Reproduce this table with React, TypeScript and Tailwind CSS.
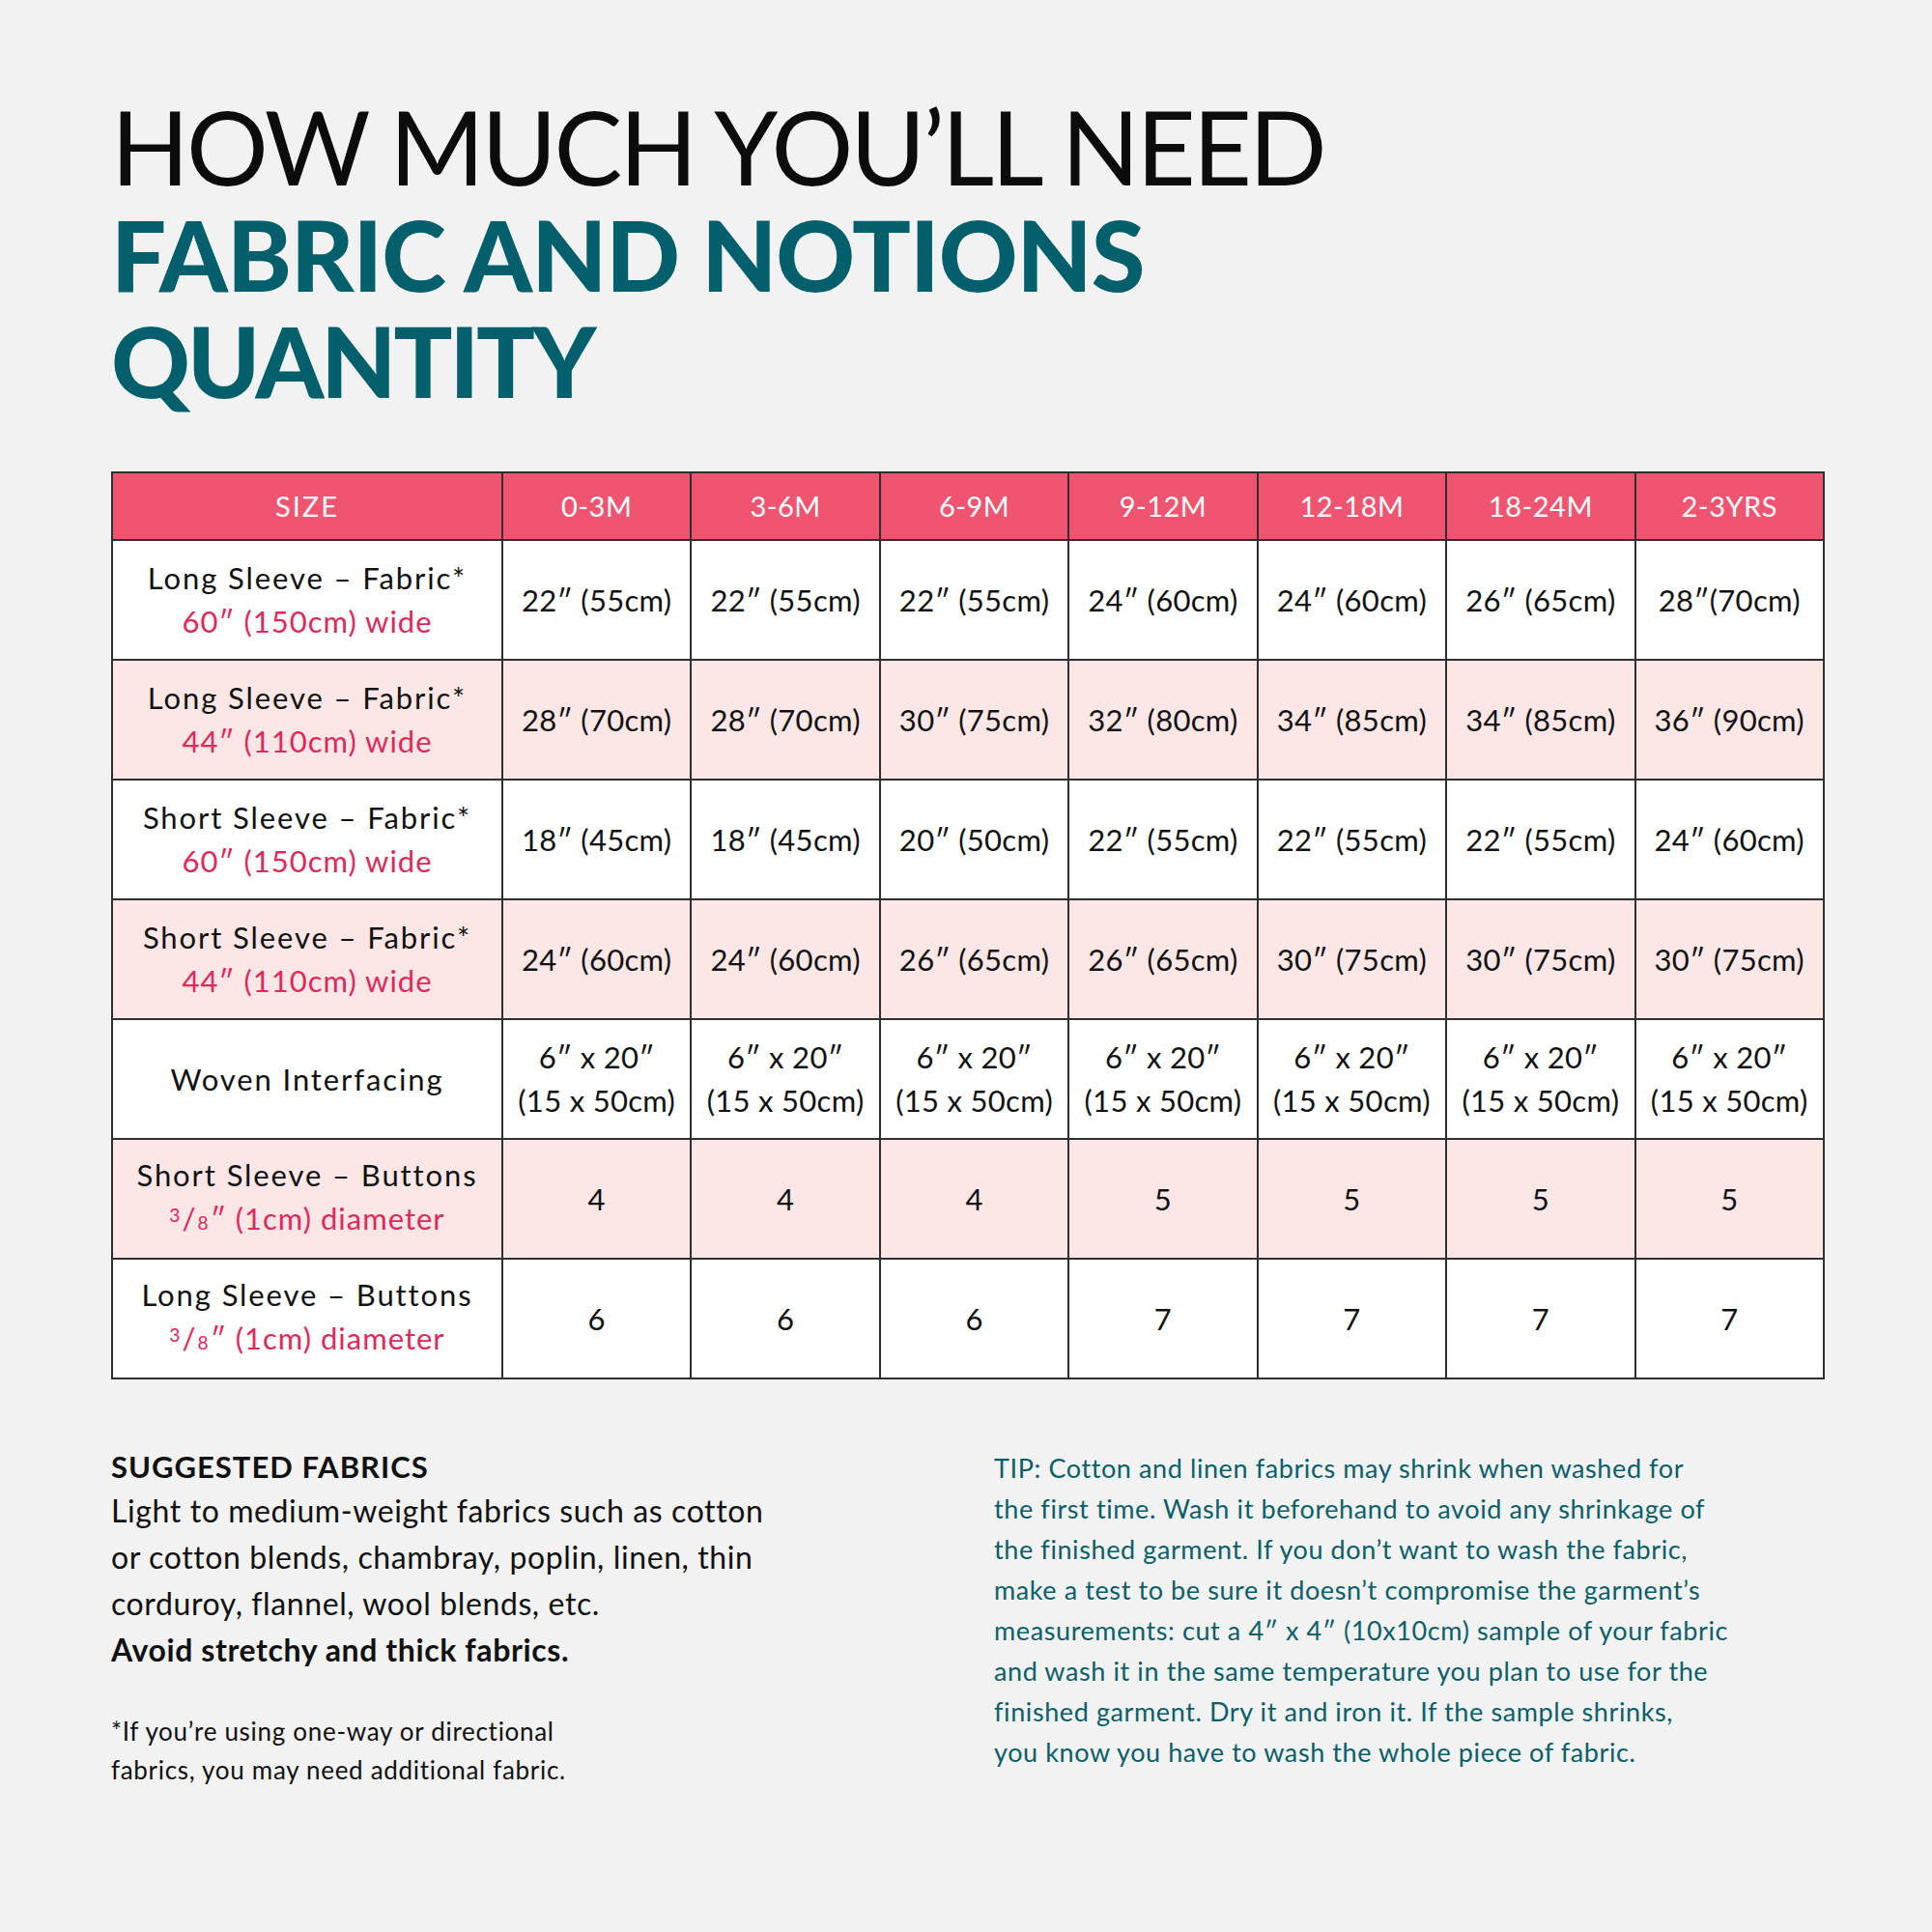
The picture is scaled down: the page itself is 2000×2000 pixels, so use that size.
import React from "react";

const sizes = ["0-3M", "3-6M", "6-9M", "9-12M", "12-18M", "18-24M", "2-3YRS"];

type Row = {
  label: string;
  sub?: React.ReactNode;
  pink: boolean;
  values: React.ReactNode[];
};

const Frac = () => (
  <span className="mr-[1px]">
    <span className="text-[0.62em] relative top-[-0.42em]">3</span>
    <span className="mx-[1px]">/</span>
    <span className="text-[0.62em]">8</span>
  </span>
);

const rows: Row[] = [
  {
    label: "Long Sleeve – Fabric*",
    sub: "60″ (150cm) wide",
    pink: false,
    values: ["22″ (55cm)", "22″ (55cm)", "22″ (55cm)", "24″ (60cm)", "24″ (60cm)", "26″ (65cm)", "28″(70cm)"],
  },
  {
    label: "Long Sleeve – Fabric*",
    sub: "44″ (110cm) wide",
    pink: true,
    values: ["28″ (70cm)", "28″ (70cm)", "30″ (75cm)", "32″ (80cm)", "34″ (85cm)", "34″ (85cm)", "36″ (90cm)"],
  },
  {
    label: "Short Sleeve – Fabric*",
    sub: "60″ (150cm) wide",
    pink: false,
    values: ["18″ (45cm)", "18″ (45cm)", "20″ (50cm)", "22″ (55cm)", "22″ (55cm)", "22″ (55cm)", "24″ (60cm)"],
  },
  {
    label: "Short Sleeve – Fabric*",
    sub: "44″ (110cm) wide",
    pink: true,
    values: ["24″ (60cm)", "24″ (60cm)", "26″ (65cm)", "26″ (65cm)", "30″ (75cm)", "30″ (75cm)", "30″ (75cm)"],
  },
  {
    label: "Woven Interfacing",
    pink: false,
    values: Array(7).fill(
      <>
        6″ x 20″
        <br />
        (15 x 50cm)
      </>
    ),
  },
  {
    label: "Short Sleeve – Buttons",
    sub: (
      <>
        <Frac />″ (1cm) diameter
      </>
    ),
    pink: true,
    values: ["4", "4", "4", "5", "5", "5", "5"],
  },
  {
    label: "Long Sleeve – Buttons",
    sub: (
      <>
        <Frac />″ (1cm) diameter
      </>
    ),
    pink: false,
    values: ["6", "6", "6", "7", "7", "7", "7"],
  },
];

export default function App() {
  return (
    <div className="w-[2000px] h-[2000px] bg-[#f1f2f1] pl-[115px] pt-[96px] font-['Lato',sans-serif] text-[#111]">
      {/* heading */}
      <h1 className="leading-[110px]">
        <span className="block text-[106px] font-normal text-[#0c0c0c] tracking-[-3px]">
          HOW MUCH YOU’LL NEED
        </span>
        <span className="block text-[101px] font-black text-[#035f6b] tracking-[-1px] pt-[2px]">
          FABRIC AND NOTIONS
        </span>
        <span className="block text-[101px] font-black text-[#035f6b] tracking-[-3px]">
          QUANTITY
        </span>
      </h1>

      {/* table */}
      <table className="mt-[60px] w-[1774px] border-collapse border-2 border-[#2f2f2f] text-center text-[31px]">
        <colgroup>
          <col className="w-[404px]" />
          {sizes.map((s) => (
            <col key={s} />
          ))}
        </colgroup>
        <thead>
          <tr className="h-[70px] bg-[#ef5571] text-white text-[29px] tracking-[0.5px]">
            <th className="border-2 border-[#2f2f2f] font-normal tracking-[2px]">SIZE</th>
            {sizes.map((s) => (
              <th key={s} className="border-2 border-[#2f2f2f] font-normal">
                {s}
              </th>
            ))}
          </tr>
        </thead>
        <tbody>
          {rows.map((r, i) => (
            <tr key={i} className={`h-[124px] ${r.pink ? "bg-[#fde7e6]" : "bg-white"}`}>
              <td className="border-2 border-[#2f2f2f] leading-[45px]">
                <div className="tracking-[1.9px]">{r.label}</div>
                {r.sub && <div className="text-[#e0285b] tracking-[1px]">{r.sub}</div>}
              </td>
              {r.values.map((v, j) => (
                <td key={j} className="border-2 border-[#2f2f2f] leading-[45px] px-0 tracking-[0.3px]">
                  {v}
                </td>
              ))}
            </tr>
          ))}
        </tbody>
      </table>

      {/* bottom notes */}
      <div className="mt-[70px] flex">
        <div className="w-[914px]">
          <h2 className="text-[31px] font-bold tracking-[1px] leading-[40px]">SUGGESTED FABRICS</h2>
          <p className="text-[32px] leading-[48px] mt-[2px] tracking-[0.6px]">
            Light to medium-weight fabrics such as cotton
            <br />
            or cotton blends, chambray, poplin, linen, thin
            <br />
            corduroy, flannel, wool blends, etc.
            <br />
            <span className="font-bold">Avoid stretchy and thick fabrics.</span>
          </p>
          <p className="mt-[40px] text-[26px] leading-[40px] tracking-[0.7px]">
            *If you’re using one-way or directional
            <br />
            fabrics, you may need additional fabric.
          </p>
        </div>
        <p className="text-[27px] leading-[42px] text-[#0b5f6a] pt-[1px] tracking-[0.6px]">
          TIP: Cotton and linen fabrics may shrink when washed for
          <br />
          the first time. Wash it beforehand to avoid any shrinkage of
          <br />
          the finished garment. If you don’t want to wash the fabric,
          <br />
          make a test to be sure it doesn’t compromise the garment’s
          <br />
          measurements: cut a 4″ x 4″ (10x10cm) sample of your fabric
          <br />
          and wash it in the same temperature you plan to use for the
          <br />
          finished garment. Dry it and iron it. If the sample shrinks,
          <br />
          you know you have to wash the whole piece of fabric.
        </p>
      </div>
    </div>
  );
}
